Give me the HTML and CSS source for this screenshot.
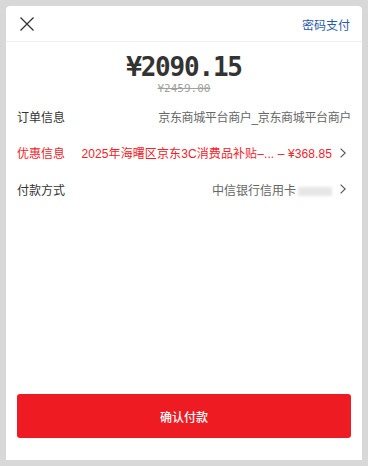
FILE: index.html
```html
<!DOCTYPE html>
<html lang="zh">
<head>
<meta charset="utf-8">
<link rel="stylesheet" href="styles.css">
</head>
<body>
<div class="card">
  <div class="header">
    <svg class="close" width="14" height="14" viewBox="0 0 14 14"><path d="M0.5 0.5 L13.5 13.5 M13.5 0.5 L0.5 13.5" stroke="#333" stroke-width="1.3" fill="none"/></svg>
    <span class="pwd">密码支付</span>
  </div>
  <div class="amount">
    <div class="price">¥2090.15</div>
    <div class="orig">¥2459.00</div>
  </div>
  <div class="rows">
    <div class="row">
      <span class="label">订单信息</span>
      <span class="value tight">京东商城平台商户_京东商城平台商户</span>
    </div>
    <div class="row red">
      <span class="label">优惠信息</span>
      <span class="value">2025年海曙区京东3C消费品补贴–... – ¥368.85</span>
      <svg class="chev" width="6" height="10" viewBox="0 0 6 10"><path d="M0.6 0.6 L5.2 5 L0.6 9.4" stroke="#555" stroke-width="1.1" fill="none"/></svg>
    </div>
    <div class="row">
      <span class="label">付款方式</span>
      <span class="value">中信银行信用卡<span class="blur"></span></span>
      <svg class="chev" width="6" height="10" viewBox="0 0 6 10"><path d="M0.6 0.6 L5.2 5 L0.6 9.4" stroke="#555" stroke-width="1.1" fill="none"/></svg>
    </div>
  </div>
  <button class="confirm">确认付款</button>
</div>
</body>
</html>
```
FILE: styles.css
```css
html, body { margin: 0; padding: 0; }
body {
  background: #d8d8d8;
  padding: 6px;
  width: 368px;
  height: 466px;
  box-sizing: border-box;
  font-family: "Liberation Sans", "Noto Sans CJK SC", sans-serif;
}
.card {
  background: #fff;
  height: 454px;
  border-radius: 4px 4px 0 0;
  display: flex;
  flex-direction: column;
}
.header {
  height: 36px;
  box-sizing: border-box;
  border-bottom: 1px solid #f0f0f0;
  display: flex;
  align-items: center;
  justify-content: space-between;
  padding: 0 12px 0 14px;
}
.close { display: block; margin-top: 1px; }
.pwd {
  font-size: 12px;
  color: #2b59a8;
  margin-top: 2px;
}
.amount {
  padding-top: 11px;
  text-align: center;
}
.price {
  font-family: "DejaVu Sans Mono", monospace;
  font-weight: bold;
  font-size: 26px;
  letter-spacing: -1.2px;
  line-height: 29px;
  color: #333;
}
.orig {
  font-family: "DejaVu Sans Mono", monospace;
  font-size: 11px;
  line-height: 14px;
  color: #a0a0a0;
  text-decoration: line-through;
}
.rows { padding: 2px 11px 0 11px; }
.row {
  height: 36.5px;
  display: flex;
  align-items: center;
  font-size: 12px;
  color: #333;
}
.row .label { flex: none; }
.row .value {
  flex: 1;
  text-align: right;
  color: #666;
  white-space: nowrap;
}
.row .value.tight { letter-spacing: -0.35px; }
.row.red .label, .row.red .value { color: #f2222a; }
.row.red .value { letter-spacing: 0.1px; }
.chev { margin-left: 8px; margin-right: 5px; flex: none; }
.blur {
  display: inline-block;
  width: 34px;
  height: 9px;
  margin-left: 2px;
  background: #e6e6e6;
  filter: blur(1.5px);
  vertical-align: -1px;
}
.confirm {
  margin: auto 11px 22px 11px;
  height: 44px;
  border: none;
  border-radius: 3px;
  background: #ee1b22;
  color: #fff;
  font-family: "Noto Sans CJK SC", sans-serif;
  font-size: 12px;
  font-weight: 500;
}
```
